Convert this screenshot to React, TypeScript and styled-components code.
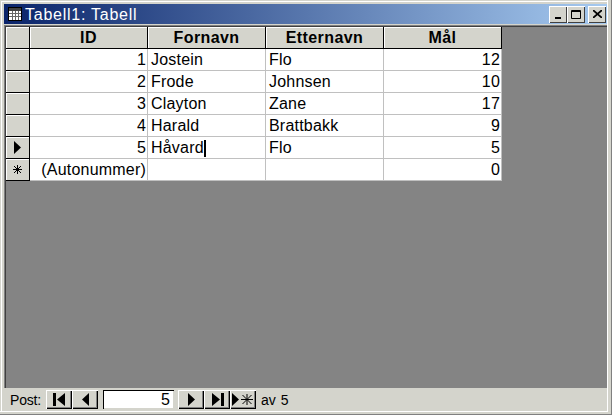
import styled, { createGlobalStyle } from "styled-components";

const GlobalStyle = createGlobalStyle`
  html, body {
    margin: 0;
    padding: 0;
    background: #d4d4cc;
  }
`;

const Window = styled.div`
  width: 612px;
  height: 415px;
  box-sizing: border-box;
  display: flex;
  flex-direction: column;
  padding: 4px 5px 4px 4px;
  background: #d4d4cc;
  box-shadow:
    inset -1px -1px 0 #808080,
    inset -4px -3px 0 #d4d4cc,
    inset -5px -4px 0 #fff,
    inset 1px 1px 0 #d4d4cc,
    inset 2px 2px 0 #fff;
  font-family: "Liberation Sans", Arial, sans-serif;
  color: #000;
`;

const TitleBar = styled.div`
  height: 20px;
  flex: none;
  display: flex;
  align-items: center;
  padding: 0 1px 0 4px;
  gap: 3px;
  background: linear-gradient(90deg, #0a246a, #a6caf0);
`;

const TitleText = styled.span`
  flex: 1;
  color: #fff;
  font-size: 16px;
  letter-spacing: 0.75px;
  padding-top: 1px;
`;

const WinButton = styled.button<{ $gap?: number }>`
  width: 18px;
  height: 17px;
  padding: 0;
  margin-left: ${({ $gap }) => $gap ?? -3}px;
  display: grid;
  place-items: center;
  background: #d4d4cc;
  border: none;
  box-shadow: inset 1px 1px 0 #fff, inset -1px -1px 0 #404040;
`;

const Sheet = styled.div`
  flex: 1;
  margin-top: 1px;
  background: #848484;
  box-shadow: inset 1px 1px 0 #808080, inset 2px 2px 0 #404040;
  padding: 2px 0 0 2px;
`;

const Grid = styled.div`
  display: grid;
  width: 496px;
  grid-template-columns: 24px repeat(4, 118px);
  grid-auto-rows: 22px;
`;

const Selector = styled.div`
  box-sizing: border-box;
  display: grid;
  place-items: center;
  background: #d4d4cc;
  border-right: 1px solid #000;
  border-bottom: 1px solid #000;
  box-shadow: inset 1px 1px 0 #fff;
`;

const HeaderCell = styled.div`
  box-sizing: border-box;
  display: flex;
  align-items: center;
  justify-content: center;
  padding-top: 1px;
  background: #d4d4cc;
  border-right: 1px solid #000;
  border-bottom: 1px solid #000;
  box-shadow: inset 1px 1px 0 #fff;
  font-size: 16px;
  font-weight: 700;
  letter-spacing: 0.4px;
`;

const Cell = styled.div<{ $right?: boolean }>`
  box-sizing: border-box;
  display: flex;
  align-items: center;
  justify-content: ${({ $right }) => ($right ? "flex-end" : "flex-start")};
  padding: 1px 1px 0 3px;
  background: #fff;
  border-right: 1px solid #c0c0c0;
  border-bottom: 1px solid #c0c0c0;
  font-size: 16px;
  letter-spacing: 0.2px;
  white-space: nowrap;
`;

const Caret = styled.span`
  display: inline-block;
  width: 2px;
  height: 17px;
  background: #000;
`;

const NavBar = styled.div`
  height: 23px;
  flex: none;
  display: flex;
  align-items: center;
  padding-left: 6px;
  background: #d4d4cc;
  font-size: 14px;
`;

const NavLabel = styled.span`
  width: 36px;
  letter-spacing: -0.2px;
`;

const NavButton = styled.button<{ $gap?: number }>`
  width: 26px;
  height: 19px;
  padding: 0;
  margin-left: ${({ $gap }) => $gap ?? 0}px;
  display: grid;
  place-items: center;
  background: #d4d4cc;
  border: none;
  box-shadow: inset 1px 1px 0 #fff, inset -1px -1px 0 #000, inset -2px -2px 0 #808080;
`;

const NavInput = styled.div`
  box-sizing: border-box;
  width: 71px;
  height: 19px;
  margin: 0 4px 0 5px;
  padding-right: 4px;
  display: flex;
  align-items: center;
  justify-content: flex-end;
  background: #fff;
  font-size: 16px;
  box-shadow: inset 1px 1px 0 #000, inset -1px -1px 0 #d4d4cc;
`;

const NavCount = styled.span`
  margin-left: 5px;
  word-spacing: 1px;
`;

const Star = ({ size = 9 }: { size?: number }) => (
  <svg width={size} height={size} viewBox="0 0 9 9" stroke="#000" strokeWidth="1" fill="none">
    <path d="M4.5 0v9M0 4.5h9M1 1l7 7M8 1l-7 7" />
  </svg>
);

const Arrow = ({ dir }: { dir: "left" | "right" }) => (
  <svg width="7" height="13" viewBox="0 0 7 13" fill="#000">
    <path d={dir === "right" ? "M0 0l7 6.5L0 13z" : "M7 0L0 6.5 7 13z"} />
  </svg>
);

const rows = [
  { id: "1", first: "Jostein", last: "Flo", goals: "12" },
  { id: "2", first: "Frode", last: "Johnsen", goals: "10" },
  { id: "3", first: "Clayton", last: "Zane", goals: "17" },
  { id: "4", first: "Harald", last: "Brattbakk", goals: "9" },
  { id: "5", first: "Håvard", last: "Flo", goals: "5" },
];

export default function App() {
  return (
    <Window>
      <GlobalStyle />
      <TitleBar>
        <svg width="14" height="14" viewBox="0 0 14 14">
          <rect x="0.5" y="0.5" width="13" height="13" fill="#fff" stroke="#000" />
          <rect x="1" y="1" width="12" height="3" fill="#404040" />
          <path d="M1 6.5h12M1 9.5h12M4.5 4v9M7.5 4v9M10.5 4v9" stroke="#666" fill="none" />
        </svg>
        <TitleText>Tabell1: Tabell</TitleText>
        <WinButton aria-label="Minimer">
          <svg width="8" height="9" viewBox="0 0 8 9">
            <rect x="1" y="7" width="6" height="2" fill="#000" />
          </svg>
        </WinButton>
        <WinButton aria-label="Maksimer" $gap={-3}>
          <svg width="10" height="9" viewBox="0 0 10 9" fill="none" stroke="#000">
            <path d="M.5.5h9v8h-9z" />
            <path d="M0 1.5h10" />
          </svg>
        </WinButton>
        <WinButton aria-label="Lukk" $gap={0}>
          <svg width="9" height="8" viewBox="0 0 9 8" fill="none" stroke="#000" strokeWidth="1.7">
            <path d="M0 0l9 8M9 0L0 8" />
          </svg>
        </WinButton>
      </TitleBar>
      <Sheet>
        <Grid>
          <Selector />
          <HeaderCell>ID</HeaderCell>
          <HeaderCell>Fornavn</HeaderCell>
          <HeaderCell>Etternavn</HeaderCell>
          <HeaderCell>Mål</HeaderCell>
          {rows.map((row) => {
            const current = row.id === "5";
            return [
              <Selector key={row.id + "s"}>{current && <Arrow dir="right" />}</Selector>,
              <Cell key={row.id + "i"} $right>{row.id}</Cell>,
              <Cell key={row.id + "f"}>
                {row.first}
                {current && <Caret />}
              </Cell>,
              <Cell key={row.id + "l"}>{row.last}</Cell>,
              <Cell key={row.id + "g"} $right>{row.goals}</Cell>,
            ];
          })}
          <Selector>
            <Star />
          </Selector>
          <Cell $right>(Autonummer)</Cell>
          <Cell />
          <Cell />
          <Cell $right>0</Cell>
        </Grid>
      </Sheet>
      <NavBar>
        <NavLabel>Post:</NavLabel>
        <NavButton aria-label="Første">
          <svg width="13" height="13" viewBox="0 0 13 13" fill="#000">
            <path d="M0 0h3v13H0zM12 0L4 6.5 12 13z" />
          </svg>
        </NavButton>
        <NavButton aria-label="Forrige">
          <Arrow dir="left" />
        </NavButton>
        <NavInput>5</NavInput>
        <NavButton aria-label="Neste">
          <Arrow dir="right" />
        </NavButton>
        <NavButton aria-label="Siste">
          <svg width="13" height="13" viewBox="0 0 13 13" fill="#000">
            <path d="M1 0l8 6.5L1 13zM10 0h3v13h-3z" />
          </svg>
        </NavButton>
        <NavButton aria-label="Ny">
          <svg width="22" height="13" viewBox="0 0 22 13">
            <path d="M0 0l7 6.5L0 13z" fill="#000" />
            <path d="M15 1v11M9 6.5h12M10.5 2l9 9M19.5 2l-9 9" stroke="#000" fill="none" />
          </svg>
        </NavButton>
        <NavCount>av 5</NavCount>
      </NavBar>
    </Window>
  );
}
